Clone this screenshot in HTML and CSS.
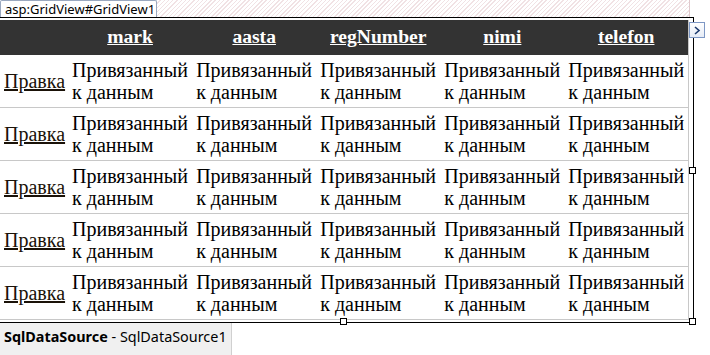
FILE: index.html
```html
<!DOCTYPE html>
<html>
<head>
<meta charset="utf-8">
<link rel="stylesheet" href="styles.css">
</head>
<body>
<div class="designer">
  <div class="tabbar">
    <div class="tab">asp:GridView#GridView1</div>
    <div class="hatch"></div>
  </div>
  <div class="sel">
    <table class="grid">
      <colgroup><col class="c0"><col class="cd"><col class="cd"><col class="cd"><col class="cd"><col class="cd"></colgroup>
      <thead>
        <tr class="head"><th></th><th><u>mark</u></th><th><u>aasta</u></th><th><u>regNumber</u></th><th><u>nimi</u></th><th><u>telefon</u></th></tr>
      </thead>
      <tbody>
        <tr><td class="edit"><u>Правка</u></td><td>Привязанный к данным</td><td>Привязанный к данным</td><td>Привязанный к данным</td><td>Привязанный к данным</td><td>Привязанный к данным</td></tr>
        <tr><td class="edit"><u>Правка</u></td><td>Привязанный к данным</td><td>Привязанный к данным</td><td>Привязанный к данным</td><td>Привязанный к данным</td><td>Привязанный к данным</td></tr>
        <tr><td class="edit"><u>Правка</u></td><td>Привязанный к данным</td><td>Привязанный к данным</td><td>Привязанный к данным</td><td>Привязанный к данным</td><td>Привязанный к данным</td></tr>
        <tr><td class="edit"><u>Правка</u></td><td>Привязанный к данным</td><td>Привязанный к данным</td><td>Привязанный к данным</td><td>Привязанный к данным</td><td>Привязанный к данным</td></tr>
        <tr><td class="edit"><u>Правка</u></td><td>Привязанный к данным</td><td>Привязанный к данным</td><td>Привязанный к данным</td><td>Привязанный к данным</td><td>Привязанный к данным</td></tr>
      </tbody>
    </table>
    <div class="smart"><svg width="8" height="9" viewBox="0 0 8 9"><path d="M2 1 L6 4.5 L2 8" fill="none" stroke="#1c3a6e" stroke-width="1.6"/></svg></div>
    <div class="handle h-right"></div>
    <div class="handle h-bottom"></div>
    <div class="handle h-corner"></div>
  </div>
  <div class="ds"><b>SqlDataSource</b> - SqlDataSource1</div>
</div>
</body>
</html>
```

FILE: styles.css
```css
html, body {
  margin: 0;
  padding: 0;
  background: #fff;
}
.designer {
  width: 710px;
  height: 355px;
  overflow: hidden;
}
.tabbar {
  display: flex;
  width: 690px;
  height: 17px;
}
.tab {
  box-sizing: border-box;
  width: 157px;
  height: 17px;
  padding: 0 0 0 4px;
  border: 1px solid #9aa8bf;
  border-bottom: none;
  border-radius: 2px 2px 0 0;
  background: #fff;
  font-family: "Noto Sans", "DejaVu Sans", sans-serif;
  font-size: 13px;
  line-height: 16px;
  color: #000;
  white-space: nowrap;
}
.hatch {
  flex: 1;
  border-right: 1px solid #e0c8cc;
  background: repeating-linear-gradient(135deg, #fff 0 2px, #f1e2e4 2px 3px);
}
.sel {
  position: relative;
  box-sizing: border-box;
  width: 694px;
  height: 306px;
  border-top: 1px solid #000;
  border-right: 1px solid #000;
  border-bottom: 1px solid #000;
  padding-top: 2px;
}
.grid {
  table-layout: fixed;
  border-collapse: collapse;
  width: 689px;
  font-family: "Liberation Serif", "Times New Roman", serif;
  font-size: 20px;
  line-height: 22px;
  color: #000;
  border-right: 1px solid #c8c8c8;
}
.c0 { width: 68px; }
.cd { width: 124px; }
.head th {
  background: #333;
  color: #fff;
  font-weight: bold;
  font-size: 19.6px;
  height: 33px;
  padding: 0 4px 2px;
  text-align: center;
}
.grid td {
  padding: 4px 0 4px 4px;
  height: 44px;
  vertical-align: middle;
  border-bottom: 1px solid #c8c8c8;
  text-align: left;
}
.grid td.edit {
  padding-left: 4px;
  color: #1a1208;
}
.smart {
  position: absolute;
  left: 689px;
  top: 4px;
  box-sizing: border-box;
  width: 16px;
  height: 16px;
  border: 1px solid #7d97c4;
  background: linear-gradient(#fff, #e6ecf6);
  display: flex;
  align-items: center;
  justify-content: center;
}
.handle {
  position: absolute;
  box-sizing: border-box;
  width: 7px;
  height: 7px;
  border: 1px solid #000;
  background: #fff;
}
.h-right { left: 689px; top: 149px; }
.h-bottom { left: 340px; top: 300px; }
.h-corner { left: 689px; top: 300px; }
.ds {
  box-sizing: border-box;
  width: 232px;
  height: 34px;
  padding: 4px 0 0 4px;
  background: #f0f0f0;
  border-right: 1px solid #d0d0d0;
  font-family: "Noto Sans", "DejaVu Sans", sans-serif;
  font-size: 14.4px;
  line-height: 20px;
  color: #000;
  white-space: nowrap;
}
.ds b { font-weight: 700; }
```
